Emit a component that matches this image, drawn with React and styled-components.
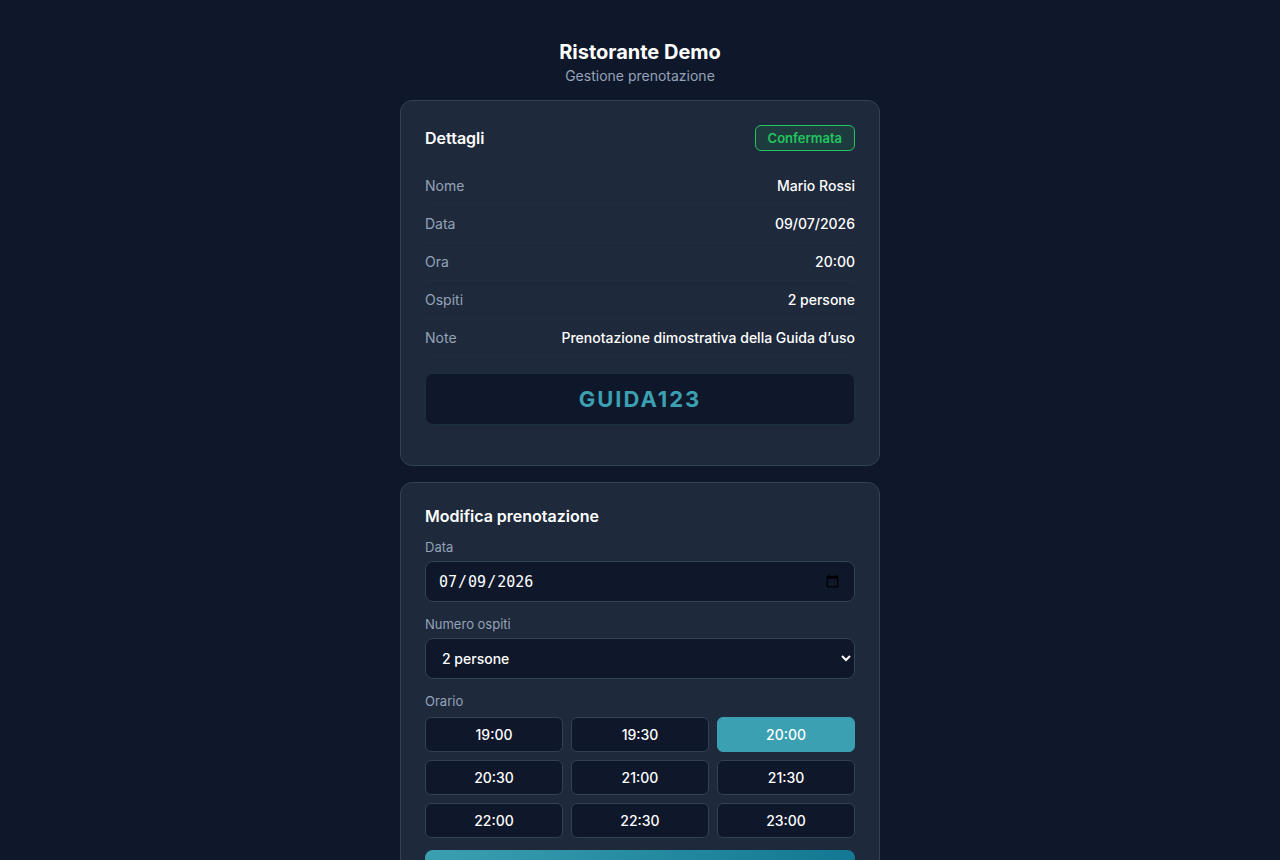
import React, { useState } from "react";
import styled, { createGlobalStyle } from "styled-components";

const GlobalStyle = createGlobalStyle`
  *, *::before, *::after { box-sizing: border-box; margin: 0; padding: 0; }
  body {
    font-family: Inter, "Liberation Sans", sans-serif;
    background: #0f172a;
    color: #ffffff;
    min-height: 100vh;
    line-height: 1.5;
  }
  ::-webkit-scrollbar { display: none; }
`;

const Page = styled.main`
  max-width: 512px;
  margin: 0 auto;
  padding: 40px 16px;
`;

const Header = styled.header`
  text-align: center;
  margin-bottom: 16px;
`;

const Title = styled.h1`
  font-size: 20px;
  line-height: 24px;
  font-weight: 700;
`;

const Subtitle = styled.p`
  font-size: 14px;
  line-height: 16px;
  margin-top: 4px;
  color: #94a3b8;
`;

const Card = styled.section`
  background: #1e293b;
  border: 1px solid #334155;
  border-radius: 12px;
  padding: 24px;
  margin-bottom: 16px;
`;

const CardHeader = styled.div`
  display: flex;
  align-items: center;
  justify-content: space-between;
  margin-bottom: 16px;
`;

const CardTitle = styled.h2`
  font-size: 16px;
  line-height: 18px;
  font-weight: 600;
`;

const Badge = styled.span`
  font-size: 13px;
  line-height: 16px;
  font-weight: 600;
  padding: 4px 12px;
  border-radius: 6px;
  border: 1px solid #22c55e;
  background: rgba(34, 197, 94, 0.12);
  color: #22c55e;
`;

const Row = styled.div`
  display: flex;
  justify-content: space-between;
  padding: 10px 0;
  font-size: 14px;
  line-height: 17px;
  border-bottom: 1px solid #1f2d3d;
`;

const Term = styled.dt`
  color: #94a3b8;
`;

const Value = styled.dd`
  font-weight: 500;
  text-align: right;
`;

const Code = styled.div`
  margin: 16px 0;
  padding: 12px;
  border: 1px solid #1a3041;
  border-radius: 8px;
  background: #0f172a;
  color: #3ba0b1;
  font-size: 22px;
  line-height: 26px;
  font-weight: 700;
  letter-spacing: 2px;
  text-align: center;
`;

const Form = styled.form`
  margin-top: 14px;
`;

const Field = styled.div`
  display: flex;
  flex-direction: column;
  gap: ${(p) => (p.$group ? "8px" : "6px")};
  margin-bottom: ${(p) => (p.$group ? "12px" : "14px")};
`;

const Label = styled.label`
  font-size: 13px;
  line-height: 16px;
  color: #94a3b8;
`;

const DateInput = styled.input`
  width: 100%;
  height: 41px;
  padding: 0 12px;
  border: 1px solid #334155;
  border-radius: 8px;
  background: #0f172a;
  color: #ffffff;
  font-family: "DejaVu Sans Mono", monospace;
  font-size: 15px;
`;

const Select = styled.select`
  width: 100%;
  height: 41px;
  padding: 0 12px;
  border: 1px solid #334155;
  border-radius: 8px;
  background: #0f172a;
  color: #ffffff;
  font-family: inherit;
  font-size: 14px;
  font-weight: 500;
`;

const Slots = styled.div`
  display: grid;
  grid-template-columns: repeat(3, 1fr);
  gap: 8px;
`;

const Slot = styled.button`
  padding: 8px;
  border: 1px solid ${(p) => (p.$active ? "#3ba0b1" : "#334155")};
  border-radius: 6px;
  background: ${(p) => (p.$active ? "#3ba0b1" : "#0f172a")};
  color: #ffffff;
  font-family: inherit;
  font-size: 14px;
  line-height: 17px;
  font-weight: 500;
  cursor: pointer;
`;

const Submit = styled.button`
  width: 100%;
  padding: 14px;
  border: 0;
  border-radius: 8px;
  background: linear-gradient(135deg, #3ba0b1, #0e7490);
  color: #ffffff;
  font-family: inherit;
  font-size: 14px;
  line-height: 20px;
  font-weight: 600;
  cursor: pointer;
`;

const details = [
  ["Nome", "Mario Rossi"],
  ["Data", "09/07/2026"],
  ["Ora", "20:00"],
  ["Ospiti", "2 persone"],
  ["Note", "Prenotazione dimostrativa della Guida d’uso"],
];

const times = ["19:00", "19:30", "20:00", "20:30", "21:00", "21:30", "22:00", "22:30", "23:00"];

export default function App() {
  const [time, setTime] = useState("20:00");
  return (
    <>
      <GlobalStyle />
      <Page>
        <Header>
          <Title>Ristorante Demo</Title>
          <Subtitle>Gestione prenotazione</Subtitle>
        </Header>
        <Card>
          <CardHeader>
            <CardTitle>Dettagli</CardTitle>
            <Badge>Confermata</Badge>
          </CardHeader>
          <dl>
            {details.map(([term, value]) => (
              <Row key={term}>
                <Term>{term}</Term>
                <Value>{value}</Value>
              </Row>
            ))}
          </dl>
          <Code>GUIDA123</Code>
        </Card>
        <Card>
          <CardTitle>Modifica prenotazione</CardTitle>
          <Form onSubmit={(e) => e.preventDefault()}>
            <Field>
              <Label htmlFor="date">Data</Label>
              <DateInput id="date" type="date" defaultValue="2026-07-09" />
            </Field>
            <Field>
              <Label htmlFor="guests">Numero ospiti</Label>
              <Select id="guests" defaultValue="2">
                <option value="1">1 persona</option>
                {[2, 3, 4, 5, 6, 7, 8].map((n) => (
                  <option key={n} value={n}>{n} persone</option>
                ))}
              </Select>
            </Field>
            <Field $group>
              <Label as="span" id="slots">Orario</Label>
              <Slots role="group" aria-labelledby="slots">
                {times.map((t) => (
                  <Slot key={t} type="button" $active={t === time} aria-pressed={t === time} onClick={() => setTime(t)}>
                    {t}
                  </Slot>
                ))}
              </Slots>
            </Field>
            <Submit type="submit">Salva modifiche</Submit>
          </Form>
        </Card>
      </Page>
    </>
  );
}
